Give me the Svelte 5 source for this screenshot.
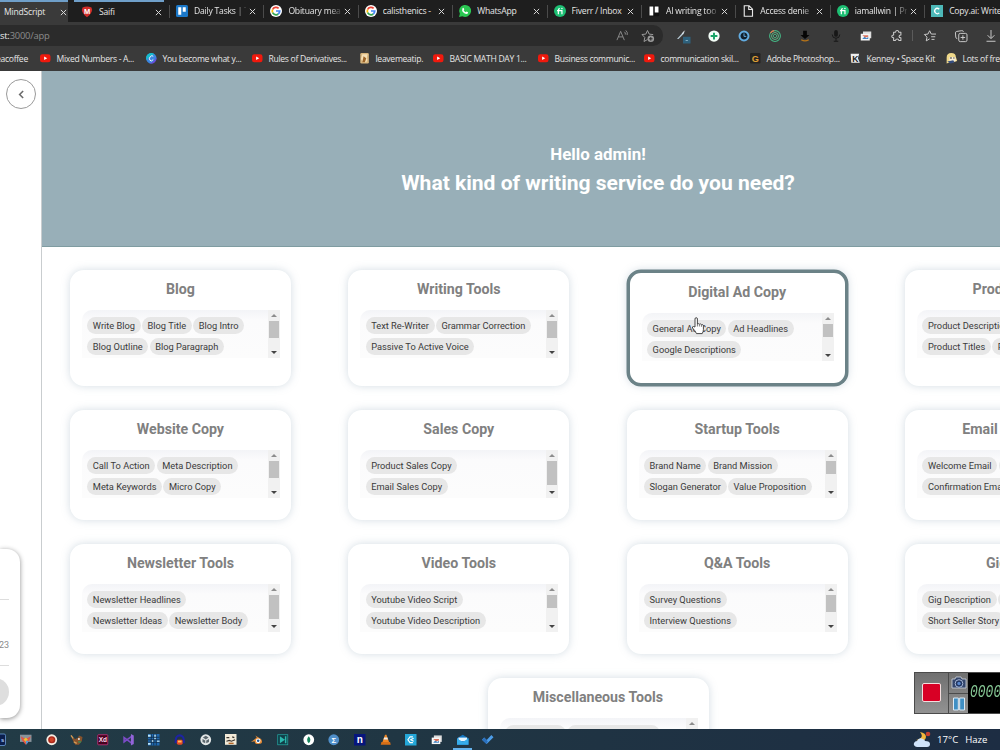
<script lang="ts">
	type Tab = { icon: string; label: string };
	type Bookmark = { icon: string; label: string; width: number };
	type Tool = {
		title: string;
		rows: string[][];
		thumb: number;
		active?: boolean;
	};

	const fiverr =
		'<circle cx="8" cy="8" r="8" fill="#1dbf73"/><path d="M5.800 12.200V6.500q0-1.800 2-1.800M4 7.600h6.600v4.600" fill="none" stroke="#fff" stroke-width="1.600"/><circle cx="10.600" cy="4.800" r="1" fill="#fff"/>';
	const photos =
		'<rect x="4" y="2" width="11" height="9" fill="#ddd"/><rect x="1" y="5" width="12" height="9" fill="#f7f7f7"/><path d="M3 12l3-3 3 2 2-2v3z" fill="#4285c4"/><path d="M3 7h8v2l-4 1z" fill="#d9705a"/>';

	// all drawn on a 16x16 grid
	const icons: Record<string, string> = {
		mcgill: '<path d="M2 2q6-3 12 0 3 6-6 13Q-1 8 2 2z" fill="#d32f2b"/><text x="8" y="10.500" font-size="10" font-weight="700" fill="#fff" text-anchor="middle">M</text>',
		trello: '<rect width="16" height="16" rx="2" fill="#1b78c8"/><rect x="3" y="3" width="4" height="10" fill="#fff"/><rect x="9" y="3" width="4" height="6" fill="#fff"/>',
		trelloDark: '<rect x="1" y="1" width="14" height="14" rx="2" fill="#111"/><rect x="2" y="2" width="5" height="12" fill="#fff"/><rect x="9" y="2" width="5" height="8" fill="#fff"/>',
		google: '<circle cx="8" cy="8" r="8" fill="#fff"/><g fill="none" stroke-width="2.300"><path d="M11.500 4.500A5 5 0 0 0 3.500 6" stroke="#ea4335"/><path d="M3.500 6a5 5 0 0 0 0 4.200" stroke="#fbbc05"/><path d="M3.500 10.200A5 5 0 0 0 11 12" stroke="#34a853"/><path d="M11 12q2-1.500 2-4H8" stroke="#4285f4"/></g>',
		whatsapp: '<path d="M0 16l1.200-4.200A8 8 0 1 1 4.500 15z" fill="#2bc752"/><path d="M4.500 4.500q1-1.500 2 0l.5 1.500-.8 1q1 2 2.800 2.800l1-1 2 1q.5 1-.8 2-3 .8-5.700-2-2-2.300-1-5.300z" fill="#fff"/>',
		fiverr,
		file: '<path d="M3 1h6.500L14 5.500V15H3zM9 1v5h5" fill="none" stroke="#e8e8e8" stroke-width="1.500"/>',
		copyai: '<rect width="16" height="16" fill="#4db8b8"/><path d="M11 5.500Q8 3 5.800 5.500T6 10.500 11 10.500" fill="none" stroke="#fff" stroke-width="1.800"/>',
		youtube: '<rect y="2" width="16" height="12" rx="3.500" fill="#f0190d"/><path d="M6.300 5.300v5.400L11 8z" fill="#fff"/>',
		canva: '<circle cx="8" cy="8" r="8" fill="#3a86e0"/><path d="M3 2a8 8 0 0 1 10 0Q6 4 1 11A8 8 0 0 1 3 2z" fill="#14bcca"/><path d="M15.500 6A8 8 0 0 1 5 15.500Q13 14 15.500 6z" fill="#7143dd"/><path d="M11 5Q9 2.800 6.500 5.500T6 11t5-1" fill="none" stroke="#fff" stroke-width="1.400"/>',
		cup: '<rect x="2" y="0" width="13" height="16" rx="2" fill="#d8b67d"/><path d="M5 2h8l-1 5q2 4-1 7H6L3 9z" fill="#f5dfb5"/><path d="M7 5l4 3-2 6H5z" fill="#9c6428"/>',
		g: '<rect width="16" height="16" rx="2" fill="#252423"/><text x="8" y="13" font-size="14" font-weight="700" fill="#e0a035" text-anchor="middle">G</text>',
		kenney: '<path d="M1 1h13l-2 7 3 7H2z" fill="#eee"/><text x="8" y="13" font-size="13" font-weight="700" fill="#222" text-anchor="middle">K</text>',
		face: '<path d="M1 7q0-7 7-7t7 6l2 6-6 2H6l-5 2z" fill="#f0d98a"/><path d="M5 6h9l1 6-6 2-4-3z" fill="#f8efd8"/><path d="M6 7h3v1.500H6zM11 7h2v1.500h-2z" fill="#333"/><path d="M2 13l9-2 2 3-6 2z" fill="#344d80"/>',
		wand: '<path d="M0 12L8 3l2-1-1 3-7 7z" fill="#b7cbd6"/><path d="M7 5l3-4" stroke="#fff"/><rect x="8" y="9" width="10" height="9" fill="#2e617c"/><path d="M11.500 14h3" stroke="#a4c8da"/>',
		plus: '<circle cx="8" cy="8" r="7.500" fill="#f4fff8"/><path d="M8 3.500v9M3.500 8h9" stroke="#1aa568" stroke-width="2.600"/>',
		clock: '<circle cx="8" cy="8" r="6" fill="#111e2b" stroke="#62abe0" stroke-width="2.600"/><path d="M8 4.500v4h3" fill="none" stroke="#62abe0" stroke-width="1.300"/>',
		radar: '<g fill="none"><circle cx="8" cy="8" r="7.200" stroke="#45b785" stroke-width="1.400"/><circle cx="8" cy="8" r="4.600" stroke="#64b886" stroke-width="1.300"/><circle cx="8" cy="8" r="2.200" stroke="#51c38b"/><path d="M2 4a7.200 7.200 0 0 1 5-3.200" stroke="#e1784f" stroke-width="1.600"/></g>',
		fetch: '<path d="M5.500 1h5v5.500H14l-6 5.500-6-5.500h3.500z" fill="#050505"/><path d="M3 13q5 3 10 0" stroke="#b87418" stroke-width="1.500" fill="none"/>',
		mic: '<rect x="5.500" y="0" width="5" height="9" rx="2.500" fill="#171717"/><path d="M3 6q0 5 5 5t5-5M8 11v4M5 15h6" fill="none" stroke="#171717" stroke-width="1.300"/>',
		photos,
		puzzle: '<path d="M3.500 3H6q.3-2.300 2.200-2.300T10.400 3h2.800v3.700q-2.500 0-2.500 1.800t2.500 1.800V14h-2.800q-.3-2-2.200-2T6 14H3.500v-3.700Q1 10.200 1 8.500t2.500-1.800z" fill="none" stroke="#ccc" stroke-width="1.400" stroke-linejoin="round"/>',
		favs: '<path d="M7.500 11.800L3 14.500l1-5L.5 6l4.800-.6L7.500 1l2.200 4.400H16M9.500 9H15M10 12.500h4" fill="none" stroke="#ccc" stroke-width="1.300"/>',
		collections: '<path d="M3 11.500Q1.200 11.300 1 9.500L.6 3.800Q.6 2.200 2.200 1.900L9 .9q2-.2 2.300 1.500" fill="none" stroke="#ccc" stroke-width="1.300"/><rect x="5" y="4.500" width="11" height="11" rx="2" fill="none" stroke="#ccc" stroke-width="1.300"/><path d="M10.500 7v6M7.500 10h6" stroke="#ccc" stroke-width="1.300"/>',
		download: '<path d="M8 0v11M3.500 7L8 11.500 12.500 7M2 15h12" fill="none" stroke="#ccc" stroke-width="1.300"/>',
		ps: '<rect width="16" height="16" rx="2" fill="#0b1e4d" stroke="#71a7e8"/><text x="12" y="11.500" font-size="8" font-weight="700" fill="#b5d4ff" text-anchor="middle">s</text>',
		chart: '<rect y="1" width="16" height="10" fill="#89939b"/><path d="M1 3l7 4 7-4-2 6-5 6-5-6z" fill="#df5748"/><path d="M8 5l3 3-3 3-3-3z" fill="#eec32d"/><path d="M8 9l4 1-3 5z" fill="#4e9ce0"/>',
		record: '<circle cx="8" cy="8" r="7.500" fill="#f4ece2"/><circle cx="8" cy="8" r="5" fill="#a92a1d"/><circle cx="8" cy="8" r="3" fill="#d14328"/>',
		gimp: '<path d="M1 4l5 3 4-2 1-3 5 2-1 6-4 5H6L3 10z" fill="#87532c"/><path d="M0 2l3 4M4 11l4 2" stroke="#d59a55" stroke-width="2"/><circle cx="11" cy="7" r="1.300" fill="#eee"/><path d="M10 11h4" stroke="#398b56" stroke-width="2"/>',
		xd: '<rect x="1" y="1" width="14" height="14" rx="1" fill="#46021f" stroke="#d53383"/><text x="8" y="11.500" font-size="9" font-weight="700" fill="#ffd8f0" text-anchor="middle">Xd</text>',
		vs: '<path d="M11.500 3.500L1.500 11V5l10 7.500" fill="none" stroke="#7c4cc7" stroke-width="2.200"/><path d="M11 0l4 2v12l-4 2z" fill="#9265d8"/>',
		grid: '<rect width="16" height="16" fill="#1f69b0"/><path d="M0 1h4v3H0zM8.500 5h3v2.500h-3zM5 8.500h3v2.500H5zM12 9h4v2h-4zM8.500 1h3v3h-3zM0 12h4v3H0z" fill="#b8e6ff"/><path d="M0 4.500h16M0 8h16M0 11.500h16M4.500 0v16M8 0v16M11.500 0v16" stroke="#10263c"/>',
		audacity: '<path d="M2.500 13V8a5.500 6 0 0 1 11 0v5" fill="none" stroke="#1d23a3" stroke-width="3"/><rect x="4" y="8" width="8" height="7" rx="2" fill="#e34a26"/><path d="M5.500 10.500h5" stroke="#ffc05d" stroke-width="2.500"/>',
		unity: '<circle cx="8" cy="8" r="7.500" fill="#e2e6e6"/><path d="M8 7.500L4 5l4-2.500L12 5zM7.300 9v4L3.500 11V7zM8.700 9v4l3.800-2V7z" fill="#5b676d"/>',
		sketch: '<rect width="16" height="15" fill="#f2ead8"/><path d="M2 5h4M10 4l3 1M2 10l4-1 3 1 5-2" fill="none" stroke="#39322c" stroke-width="1.600"/><path d="M5 13h7" stroke="#b4682a" stroke-width="2"/>',
		blender: '<path d="M0 11l8-6-2-3 8 5q4 7-4 7-5 0-5-4z" fill="#e58a35"/><circle cx="10" cy="9.500" r="3.200" fill="#fff"/><circle cx="10" cy="9.500" r="1.800" fill="#255a94"/>',
		filmora: '<rect x="1" y="1" width="14" height="14" fill="#103e48" stroke="#25a7a2"/><path d="M4 3l7 5-7 5zM13 3v10h-2V3z" fill="#2cb9ae"/>',
		mongo: '<circle cx="8" cy="8" r="7.500" fill="#fff"/><path d="M8 3q4.500 5 0 10Q3.500 8 8 3z" fill="#13835b"/>',
		sigma: '<circle cx="8" cy="8" r="7.500" fill="#4f8fca"/><text x="8" y="12" font-size="11" font-weight="700" fill="#fff" text-anchor="middle">Σ</text>',
		n: '<rect width="16" height="16" fill="#07167d"/><text x="8" y="12.500" font-size="14" font-weight="700" fill="#fff" text-anchor="middle">n</text>',
		vlc: '<path d="M7 1h2l4 11H3z" fill="#ee8624"/><path d="M5.700 5h4.600l.8 2.500H4.900z" fill="#eee"/><path d="M2 11h12l1 4H1z" fill="#d66f17"/>',
		cyber: '<rect width="16" height="16" fill="#24a7d8"/><path d="M11 4H7L4 8l3 4h4M12 6L8 8l4 2" fill="none" stroke="#fff" stroke-width="1.500"/>',
		mail: '<path d="M0 6l8-5 8 5v9H0z" fill="#1679c4"/><path d="M2 5h12v5H2z" fill="#e4f5ff"/><path d="M0 6l8 5 8-5v9H0z" fill="#36acea"/>',
		todo: '<path d="M0 8l3-3 3.500 3.500L13 1.500l3 3L6.500 14z" fill="#4d9de8"/><path d="M0 8l3-3 5 5-2 4z" fill="#2b6fbc"/>'
	};

	const tabs: Tab[] = [
		{ icon: 'trello', label: 'Daily Tasks | T' },
		{ icon: 'google', label: 'Obituary mea' },
		{ icon: 'google', label: 'calisthenics -' },
		{ icon: 'whatsapp', label: 'WhatsApp' },
		{ icon: 'fiverr', label: 'Fiverr / Inbox' },
		{ icon: 'trelloDark', label: 'AI writing too' },
		{ icon: 'file', label: 'Access denie' },
		{ icon: 'fiverr', label: 'iamallwin | Pr' },
		{ icon: 'copyai', label: 'Copy.ai: Write' }
	];

	const fading = ['Daily Tasks | T', 'Obituary mea', 'AI writing too', 'Access denie', 'iamallwin | Pr'];

	const extensions = ['wand', 'plus', 'clock', 'radar', 'fetch', 'mic', 'photos', 'puzzle'];

	const bookmarks: Bookmark[] = [
		{ icon: 'youtube', label: 'Mixed Numbers - A...', width: 106 },
		{ icon: 'canva', label: 'You become what y...', width: 106 },
		{ icon: 'youtube', label: 'Rules of Derivatives...', width: 107 },
		{ icon: 'cup', label: 'leavemeatip.', width: 74 },
		{ icon: 'youtube', label: 'BASIC MATH DAY 1...', width: 105 },
		{ icon: 'youtube', label: 'Business communic...', width: 106 },
		{ icon: 'youtube', label: 'communication skil...', width: 106 },
		{ icon: 'g', label: 'Adobe Photoshop...', width: 100 },
		{ icon: 'kenney', label: 'Kenney • Space Kit', width: 96 },
		{ icon: 'face', label: 'Lots of free', width: 100 }
	];

	const tools: Tool[] = [
		{ title: 'Blog', rows: [['Write Blog', 'Blog Title', 'Blog Intro'], ['Blog Outline', 'Blog Paragraph']], thumb: 17 },
		{ title: 'Writing Tools', rows: [['Text Re-Writer', 'Grammar Correction'], ['Passive To Active Voice']], thumb: 17 },
		{ title: 'Digital Ad Copy', rows: [['General Ad Copy', 'Ad Headlines'], ['Google Descriptions']], thumb: 13, active: true },
		{ title: 'Product Copy', rows: [['Product Descriptions'], ['Product Titles', 'Product Benefits']], thumb: 17 },
		{ title: 'Website Copy', rows: [['Call To Action', 'Meta Description'], ['Meta Keywords', 'Micro Copy']], thumb: 17 },
		{ title: 'Sales Copy', rows: [['Product Sales Copy'], ['Email Sales Copy']], thumb: 24 },
		{ title: 'Startup Tools', rows: [['Brand Name', 'Brand Mission'], ['Slogan Generator', 'Value Proposition']], thumb: 13 },
		{ title: 'Email Assistants', rows: [['Welcome Email', 'Cold Email'], ['Confirmation Email']], thumb: 17 },
		{ title: 'Newsletter Tools', rows: [['Newsletter Headlines'], ['Newsletter Ideas', 'Newsletter Body']], thumb: 24 },
		{ title: 'Video Tools', rows: [['Youtube Video Script'], ['Youtube Video Description']], thumb: 13 },
		{ title: 'Q&A Tools', rows: [['Survey Questions'], ['Interview Questions']], thumb: 17 },
		{ title: 'Gig Tools', rows: [['Gig Description', 'Gig Titles'], ['Short Seller Story']], thumb: 17 },
		{ title: 'Miscellaneous Tools', rows: [['Cover Letter', 'Personal Statement'], ['Song Lyrics']], thumb: 17 }
	];

	const taskbar = [
		'ps', 'chart', 'record', 'gimp', 'xd', 'vs', 'grid', 'audacity', 'unity', 'sketch',
		'blender', 'filmora', 'mongo', 'sigma', 'n', 'vlc', 'cyber', 'photos', 'mail', 'todo'
	];
</script>

{#snippet icon(name: string)}
	<svg class="icon" viewBox="0 0 16 16">{@html icons[name]}</svg>
{/snippet}

{#snippet close()}
	<svg class="close" viewBox="0 0 8 8"><path d="M1 1l6 6M7 1L1 7" stroke="#ddd" stroke-width="1.1" /></svg>
{/snippet}

<div class="screen">
	<header class="browser">
		<div class="tabs">
			<div class="tab tab--current"><span>MindScript</span>{@render close()}</div>
			<div class="tab tab--second">{@render icon('mcgill')}<span>Saifi</span>{@render close()}</div>
			{#each tabs as tab}
				<div class="tab">
					{@render icon(tab.icon)}
					<span class:fade={fading.includes(tab.label)}>{tab.label}</span>
					{@render close()}
				</div>
			{/each}
		</div>

		<div class="toolbar">
			<div class="address">
				<span class="address__url"><b>st:</b>3000/app</span>
				<svg class="address__read" viewBox="0 0 14 14"><path d="M1 12L5 2.500l4 9.500M2.500 8.500h5M9 3q1.500 1 1 3M10.500 1.500q2.500 2 1.500 5" fill="none" stroke="#8f8f8f" /></svg>
				<svg class="address__star" viewBox="0 0 14 14"><path d="M6.500 10.500L3 12.500l.8-4L1 5.500l3.800-.4L6.500 1.500l1.700 3.600 4 .5" fill="none" stroke="#9a9a9a" /><circle cx="9.800" cy="9.800" r="3.300" fill="#9a9a9a" /><path d="M9.800 8v3.600M8 9.800h3.600" stroke="#2b2b2b" /></svg>
			</div>
			<div class="extensions">
				{#each extensions as name}<i class="ext">{@render icon(name)}</i>{/each}
			</div>
			<div class="divider"></div>
			<div class="actions">
				<i class="ext">{@render icon('favs')}</i>
				<i class="ext">{@render icon('collections')}</i>
				<i class="ext">{@render icon('download')}</i>
			</div>
		</div>

		<nav class="bookmarks">
			<span class="bookmarks__cut">eacoffee</span>
			{#each bookmarks as mark}
				<span class="bookmark" style:width="{mark.width}px">{@render icon(mark.icon)}{mark.label}</span>
			{/each}
		</nav>
	</header>

	<div class="app">
		<aside class="sidebar">
			<button class="collapse" type="button" aria-label="Collapse sidebar">
				<svg viewBox="0 0 10 10"><path d="M6.500 1.800L3.300 5l3.200 3.200" fill="none" stroke="#6a6a6a" stroke-width="1.400" /></svg>
			</button>
			<div class="account">
				<div class="account__plan"></div>
				<div class="account__date">23</div>
				<div class="account__avatar"></div>
			</div>
		</aside>

		<main class="main">
			<section class="hero">
				<h2>Hello admin!</h2>
				<h1>What kind of writing service do you need?</h1>
			</section>
			<section class="cards">
				{#each tools as tool}
					<article class="card" class:active={tool.active}>
						<h3>{tool.title}</h3>
						<div class="box">
							<div class="tags">
								{#each tool.rows as row}
									<div class="row">
										{#each row as tag}<span class="tag">{tag}</span>{/each}
									</div>
								{/each}
							</div>
							<div class="scroll">
								<i class="scroll__up"></i>
								<div class="scroll__track"><div class="scroll__thumb" style:height="{tool.thumb}px"></div></div>
								<i class="scroll__down"></i>
							</div>
						</div>
					</article>
				{/each}
			</section>
		</main>
	</div>

	<footer class="taskbar">
		{#each taskbar as name}
			<i class="task" class:task--open={name === 'mail'}>{@render icon(name)}</i>
		{/each}
		<div class="weather">
			<svg viewBox="0 0 18 18"><path d="M7 1q5 6-4 8 9 3 10-3 0-4-6-5z" fill="#f3b83b" /><path d="M4 16q-4-1-3-4 1-2 3-2 2-4 6-2 2 1 2 2 5 0 5 3 0 3-3 3z" fill="#cfe3fa" /><circle cx="15" cy="3" r="2.300" fill="#c8412e" /></svg>
			<span>17°C</span><span>Haze</span>
		</div>
	</footer>

	<div class="recorder">
		<div class="recorder__stop"><i></i></div>
		<div class="recorder__side">
			<div><svg viewBox="0 0 16 14"><path d="M1 3h3l1-2h5l1 2h4v9H1z" fill="#34466c" stroke="#cfd5e0" stroke-width=".8" /><circle cx="8" cy="7.500" r="3.800" fill="#20345f" stroke="#a9b9d8" /><circle cx="8" cy="7.500" r="1.700" fill="#5988ce" /></svg></div>
			<div><svg viewBox="0 0 16 14"><path d="M2.500 1h4.800v12H2.500zM8.700 1h4.800v12H8.700z" fill="#3f8fc4" stroke="#dceaf5" /></svg></div>
		</div>
		<div class="recorder__time"><span>0000</span></div>
	</div>

	<svg class="cursor" viewBox="0 0 14 18"><path d="M4 10V2q0-1.300 1.200-1.300T6.400 2v5q1-.8 2 .2 1.200-.7 2 .4 1.600-.4 2 1v4q0 2-1.200 4H5.500Q4 13.500 1.500 11 1 9.500 2.500 9.500z" fill="#fff" stroke="#333" stroke-width=".9" /><path d="M6.400 7v2.500M8.400 7.500v2M10.400 8v1.800" stroke="#444" stroke-width=".7" /></svg>
</div>

<style>
	:global(body) {
		margin: 0;
		overflow: hidden;
	}

	.screen {
		position: relative;
		display: flex;
		flex-direction: column;
		width: 1000px;
		height: 750px;
		overflow: hidden;
		background: #fff;
		font-family: Roboto, 'Liberation Sans', sans-serif;
	}

	.icon {
		display: block;
		flex: none;
		width: 12px;
		height: 12px;
		overflow: visible;
		font-family: 'Liberation Sans', sans-serif;
		font-style: normal;
		letter-spacing: 0;
	}

	.browser {
		flex: none;
		height: 71px;
		background: #3a3a3a;
		color: #e6e6e6;
		font-family: 'Open Sans', 'Noto Sans', sans-serif;
		font-size: 8.6px;
		letter-spacing: -0.22px;
		white-space: nowrap;
	}

	.tabs {
		display: flex;
		height: 22px;
		background: #1e1e1e;
	}

	.tab {
		display: flex;
		flex: none;
		align-items: center;
		box-sizing: border-box;
		width: 94.4px;
		padding: 0 7px 0 7px;
		position: relative;
	}

	.tab::before {
		content: '';
		position: absolute;
		left: 0;
		top: 5px;
		height: 13px;
		border-left: 1px solid #4b4b4b;
	}

	.tab span {
		flex: 1;
		min-width: 0;
		margin: 0 3px 0 6px;
		overflow: hidden;
	}

	.fade {
		mask-image: linear-gradient(90deg, #000 78%, rgba(0, 0, 0, 0.15));
	}

	.close {
		flex: none;
		width: 7px;
		height: 7px;
	}

	.tab--current {
		width: 68px;
		padding: 0 1px 0 0;
		border-top: 2px solid #6f9fc9;
		background: #3a3a3a;
	}

	.tab--current span {
		margin-left: 4px;
	}

	.tab--second {
		width: 90px;
		margin: 0 5px 0 6px;
		padding: 0 2px 0 7px;
		border-top: 2px solid #6f9fc9;
	}

	.tab--current::before,
	.tab--second::before {
		display: none;
	}

	.toolbar {
		display: flex;
		align-items: center;
		height: 27px;
	}

	.address {
		display: flex;
		flex: none;
		align-items: center;
		box-sizing: border-box;
		width: 663px;
		height: 21px;
		padding-right: 8px;
		border-radius: 0 10px 10px 0;
		background: #2b2b2b;
	}

	.address__url {
		flex: 1;
		color: #8c8c8c;
		font-size: 9.4px;
	}

	.address__url b {
		color: #eee;
		font-weight: 400;
	}

	.address__read {
		width: 13px;
		height: 13px;
		margin-right: 12px;
	}

	.address__star {
		width: 14px;
		height: 14px;
	}

	.extensions,
	.actions {
		display: flex;
		flex: none;
	}

	.extensions {
		margin-left: 5px;
	}

	.ext {
		display: flex;
		flex: none;
		justify-content: center;
		width: 30.5px;
	}

	.divider {
		height: 11px;
		border-left: 1px solid #5b5b5b;
	}

	.actions {
		margin-left: 2px;
	}

	.bookmarks {
		display: flex;
		align-items: center;
		height: 19px;
		letter-spacing: -0.3px;
	}

	.bookmarks__cut {
		flex: none;
		width: 40px;
		text-indent: -4px;
	}

	.bookmark {
		display: flex;
		flex: none;
		align-items: center;
		gap: 6px;
	}

	.bookmark .icon {
		width: 10.5px;
		height: 10.5px;
	}

	.app {
		display: flex;
		flex: 1;
		min-height: 0;
		overflow: hidden;
	}

	.sidebar {
		display: flex;
		flex: none;
		flex-direction: column;
		justify-content: space-between;
		box-sizing: border-box;
		width: 42px;
		padding: 8px 0 11px;
		border-right: 1px solid #c9cdcf;
	}

	.collapse {
		display: flex;
		align-items: center;
		justify-content: center;
		box-sizing: border-box;
		width: 30px;
		height: 30px;
		margin-left: 6px;
		padding: 0;
		border: 1px solid #9a9a9a;
		border-radius: 50%;
		background: #fff;
	}

	.collapse svg {
		width: 11px;
		height: 11px;
	}

	.account {
		box-sizing: border-box;
		width: 20px;
		height: 169px;
		padding-right: 11px;
		border-radius: 0 13px 13px 0;
		box-shadow: 0 1px 5px rgba(0, 0, 0, 0.45);
	}

	.account__plan {
		height: 50px;
		border-bottom: 1px solid #ddd;
	}

	.account__date {
		height: 65px;
		border-bottom: 1px solid #ddd;
		color: #8b8b8b;
		font-size: 9px;
		line-height: 90px;
		direction: rtl;
	}

	.account__avatar {
		width: 28px;
		height: 28px;
		margin: 12px 0 0 -19px;
		border-radius: 50%;
		background: #dedede;
	}

	.main {
		flex: none;
		width: 1112px;
	}

	.hero {
		display: flex;
		flex-direction: column;
		align-items: center;
		box-sizing: border-box;
		height: 176px;
		padding-top: 72px;
		border-bottom: 1px solid #7f9ca1;
		background: #98afb8;
		color: #fff;
	}

	.hero h2,
	.hero h1 {
		margin: 0;
		font-weight: 700;
	}

	.hero h2 {
		font-size: 16.9px;
		line-height: 22px;
	}

	.hero h1 {
		margin-top: 4px;
		font-size: 21.05px;
		line-height: 28px;
	}

	.cards {
		display: flex;
		flex-wrap: wrap;
		justify-content: center;
		gap: 23.5px 57.4px;
		padding-top: 22.6px;
	}

	.card {
		box-sizing: border-box;
		width: 221px;
		min-height: 110.5px;
		padding: 10.9px 11px 0 12px;
		border-radius: 14px;
		background: #fff;
		box-shadow: 0 0 8px rgba(130, 155, 175, 0.35);
	}

	.card.active {
		min-height: 116.5px;
		border: 3px solid #6b8287;
		box-shadow: 0 0 0 0.5px #6b8287, 0 0 8px rgba(130, 155, 175, 0.35);
	}

	.card h3 {
		margin: 0 1px 0 0;
		color: #808080;
		font-size: 14.2px;
		font-weight: 700;
		line-height: 18px;
		text-align: center;
	}

	.box {
		display: flex;
		height: 48px;
		margin-top: 11.2px;
		border-radius: 10px 0 0 0;
		overflow: hidden;
		background: linear-gradient(#f3f4f7, #fbfbfc 10px, #fcfcfc);
	}

	.tags {
		flex: 1;
		min-width: 0;
		padding: 7.2px 0 0 5.3px;
	}

	.row {
		display: flex;
		gap: 1.3px;
		margin-bottom: 4px;
	}

	.tag {
		height: 17px;
		padding: 0 5.6px;
		border-radius: 9px;
		background: #e7e7e7;
		color: #3a3a3a;
		font-size: 9.28px;
		line-height: 17px;
		white-space: nowrap;
	}

	.scroll {
		display: flex;
		flex: none;
		flex-direction: column;
		align-items: center;
		width: 12px;
		background: #f1f1f1;
	}

	.scroll__up,
	.scroll__down {
		margin: 4px 0;
		border: 3px solid transparent;
		border-top: 0;
		border-bottom: 3px solid #8d8d8d;
	}

	.scroll__down {
		border-top: 3px solid #444;
		border-bottom: 0;
	}

	.scroll__track {
		flex: 1;
	}

	.scroll__thumb {
		width: 10px;
		background: #c1c1c1;
	}

	.taskbar {
		display: flex;
		flex: none;
		align-items: center;
		height: 21px;
		background: linear-gradient(90deg, #223b46, #203643 40%, #1d2d43);
		color: #fff;
		font-family: 'Open Sans', 'Noto Sans', sans-serif;
		font-size: 9.6px;
	}

	.task {
		display: flex;
		flex: none;
		align-items: center;
		justify-content: center;
		box-sizing: border-box;
		width: 19px;
		height: 21px;
		margin-right: 6.7px;
	}

	.task:first-child {
		margin-left: -9.5px;
	}

	.task .icon {
		width: 11.5px;
		height: 11.5px;
	}

	.task--open {
		box-shadow: inset 0 -2px #65b3ed;
	}

	.weather {
		display: flex;
		align-items: center;
		gap: 7px;
		margin-left: auto;
		padding-right: 12.5px;
	}

	.weather svg {
		width: 18px;
		height: 18px;
		margin-right: -1px;
	}

	.recorder {
		position: absolute;
		left: 914px;
		top: 672px;
		display: flex;
		box-sizing: border-box;
		width: 100px;
		height: 42px;
		border: 1px solid #4b4b4b;
		background: linear-gradient(#707070, #929292);
	}

	.recorder__stop {
		display: flex;
		align-items: center;
		justify-content: center;
		width: 33px;
		border-right: 1px solid #4b4b4b;
	}

	.recorder__stop i {
		width: 17px;
		height: 17px;
		margin: 0 1px 2px 0;
		border: 1.5px solid #f3dede;
		border-radius: 2px;
		background: #d80025;
	}

	.recorder__side {
		width: 19px;
	}

	.recorder__side div {
		display: flex;
		align-items: center;
		justify-content: center;
		height: 20px;
	}

	.recorder__side div + div {
		border-top: 1px solid #4b4b4b;
	}

	.recorder__side svg {
		width: 16px;
		height: 14px;
	}

	.recorder__time {
		display: flex;
		flex: 1;
		align-items: center;
		padding-left: 2px;
		background: #000;
		color: #86c795;
		font: italic 13px/40px 'Liberation Mono', monospace;
	}

	.recorder__time span {
		transform: scaleY(1.35);
	}

	.cursor {
		position: absolute;
		left: 691px;
		top: 317px;
		width: 14px;
		height: 18px;
	}
</style>
